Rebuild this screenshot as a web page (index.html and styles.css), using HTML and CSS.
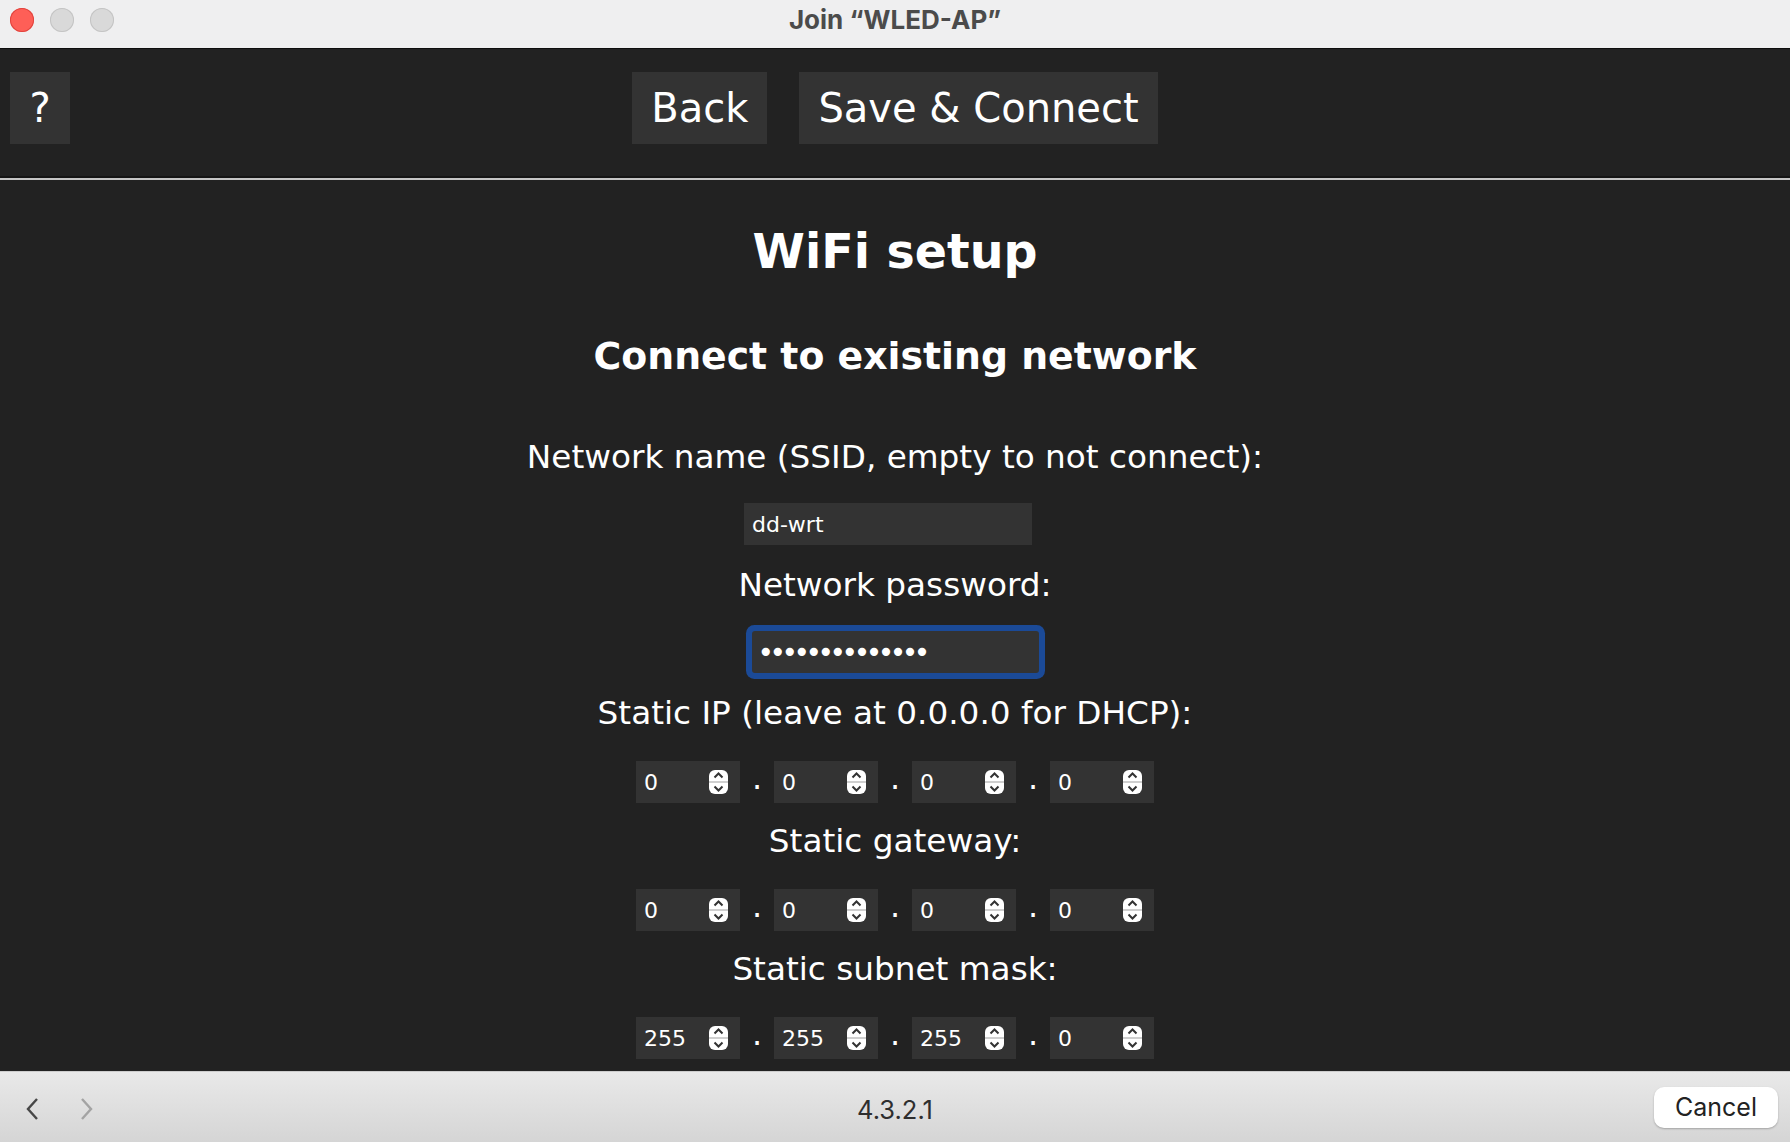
FILE: index.html
```
<!DOCTYPE html>
<html lang="en">
<head>
  <meta charset="UTF-8" />
  <meta name="viewport" content="width=device-width, initial-scale=1.0"/>
  <title>Join "WLED-AP"</title>
  <link rel="stylesheet" href="styles.css">
</head>
<body>
  <div class="titlebar">
    <div class="lights">
      <span class="light close"></span>
      <span class="light"></span>
      <span class="light"></span>
    </div>
    <div class="wintitle">Join “WLED-AP”</div>
    <div></div>
  </div>

  <div class="page">
    <div class="help"><button class="wbtn" type="button">?</button></div>
    <div class="topbtns">
      <button class="wbtn" type="button">Back</button>
      <button class="wbtn" type="submit">Save &amp; Connect</button>
    </div>
    <hr>
    <h2>WiFi setup</h2>
    <h3>Connect to existing network</h3>

    <div class="lbl">Network name (SSID, empty to not connect):</div>
    <div class="row"><input class="txt ssid" type="text" name="CS" maxlength="32" value="dd-wrt"></div>

    <div class="lbl">Network password:</div>
    <div class="row"><input class="txt pw" id="pw" type="password" name="CP" maxlength="63" value="wledwledwled12"></div>

    <div class="lbl">Static IP (leave at 0.0.0.0 for DHCP):</div>
    <div class="row nums">
      <div class="num"><input type="number" name="I0" value="0"><svg class="spin" viewBox="0 0 19 24"><rect width="19" height="24" rx="6" fill="#fff"/><rect y="11" width="19" height="2" fill="#cfcfcf"/><path d="M5.5 7.5 9.5 3.5 13.5 7.5M5.5 16.5 9.5 20.5 13.5 16.5" fill="none" stroke="#333" stroke-width="2"/></svg></div>
      <span class="dot">.</span>
      <div class="num"><input type="number" name="I1" value="0"><svg class="spin" viewBox="0 0 19 24"><rect width="19" height="24" rx="6" fill="#fff"/><rect y="11" width="19" height="2" fill="#cfcfcf"/><path d="M5.5 7.5 9.5 3.5 13.5 7.5M5.5 16.5 9.5 20.5 13.5 16.5" fill="none" stroke="#333" stroke-width="2"/></svg></div>
      <span class="dot">.</span>
      <div class="num"><input type="number" name="I2" value="0"><svg class="spin" viewBox="0 0 19 24"><rect width="19" height="24" rx="6" fill="#fff"/><rect y="11" width="19" height="2" fill="#cfcfcf"/><path d="M5.5 7.5 9.5 3.5 13.5 7.5M5.5 16.5 9.5 20.5 13.5 16.5" fill="none" stroke="#333" stroke-width="2"/></svg></div>
      <span class="dot">.</span>
      <div class="num"><input type="number" name="I3" value="0"><svg class="spin" viewBox="0 0 19 24"><rect width="19" height="24" rx="6" fill="#fff"/><rect y="11" width="19" height="2" fill="#cfcfcf"/><path d="M5.5 7.5 9.5 3.5 13.5 7.5M5.5 16.5 9.5 20.5 13.5 16.5" fill="none" stroke="#333" stroke-width="2"/></svg></div>
    </div>

    <div class="lbl">Static gateway:</div>
    <div class="row nums">
      <div class="num"><input type="number" name="G0" value="0"><svg class="spin" viewBox="0 0 19 24"><rect width="19" height="24" rx="6" fill="#fff"/><rect y="11" width="19" height="2" fill="#cfcfcf"/><path d="M5.5 7.5 9.5 3.5 13.5 7.5M5.5 16.5 9.5 20.5 13.5 16.5" fill="none" stroke="#333" stroke-width="2"/></svg></div>
      <span class="dot">.</span>
      <div class="num"><input type="number" name="G1" value="0"><svg class="spin" viewBox="0 0 19 24"><rect width="19" height="24" rx="6" fill="#fff"/><rect y="11" width="19" height="2" fill="#cfcfcf"/><path d="M5.5 7.5 9.5 3.5 13.5 7.5M5.5 16.5 9.5 20.5 13.5 16.5" fill="none" stroke="#333" stroke-width="2"/></svg></div>
      <span class="dot">.</span>
      <div class="num"><input type="number" name="G2" value="0"><svg class="spin" viewBox="0 0 19 24"><rect width="19" height="24" rx="6" fill="#fff"/><rect y="11" width="19" height="2" fill="#cfcfcf"/><path d="M5.5 7.5 9.5 3.5 13.5 7.5M5.5 16.5 9.5 20.5 13.5 16.5" fill="none" stroke="#333" stroke-width="2"/></svg></div>
      <span class="dot">.</span>
      <div class="num"><input type="number" name="G3" value="0"><svg class="spin" viewBox="0 0 19 24"><rect width="19" height="24" rx="6" fill="#fff"/><rect y="11" width="19" height="2" fill="#cfcfcf"/><path d="M5.5 7.5 9.5 3.5 13.5 7.5M5.5 16.5 9.5 20.5 13.5 16.5" fill="none" stroke="#333" stroke-width="2"/></svg></div>
    </div>

    <div class="lbl">Static subnet mask:</div>
    <div class="row nums">
      <div class="num"><input type="number" name="S0" value="255"><svg class="spin" viewBox="0 0 19 24"><rect width="19" height="24" rx="6" fill="#fff"/><rect y="11" width="19" height="2" fill="#cfcfcf"/><path d="M5.5 7.5 9.5 3.5 13.5 7.5M5.5 16.5 9.5 20.5 13.5 16.5" fill="none" stroke="#333" stroke-width="2"/></svg></div>
      <span class="dot">.</span>
      <div class="num"><input type="number" name="S1" value="255"><svg class="spin" viewBox="0 0 19 24"><rect width="19" height="24" rx="6" fill="#fff"/><rect y="11" width="19" height="2" fill="#cfcfcf"/><path d="M5.5 7.5 9.5 3.5 13.5 7.5M5.5 16.5 9.5 20.5 13.5 16.5" fill="none" stroke="#333" stroke-width="2"/></svg></div>
      <span class="dot">.</span>
      <div class="num"><input type="number" name="S2" value="255"><svg class="spin" viewBox="0 0 19 24"><rect width="19" height="24" rx="6" fill="#fff"/><rect y="11" width="19" height="2" fill="#cfcfcf"/><path d="M5.5 7.5 9.5 3.5 13.5 7.5M5.5 16.5 9.5 20.5 13.5 16.5" fill="none" stroke="#333" stroke-width="2"/></svg></div>
      <span class="dot">.</span>
      <div class="num"><input type="number" name="S3" value="0"><svg class="spin" viewBox="0 0 19 24"><rect width="19" height="24" rx="6" fill="#fff"/><rect y="11" width="19" height="2" fill="#cfcfcf"/><path d="M5.5 7.5 9.5 3.5 13.5 7.5M5.5 16.5 9.5 20.5 13.5 16.5" fill="none" stroke="#333" stroke-width="2"/></svg></div>
    </div>
  </div>

  <div class="bottombar">
    <div class="navarrows">
      <svg class="arrow" viewBox="0 0 14 24"><path d="M12 2 3 12 12 22" fill="none" stroke="#474747" stroke-width="2.4"/></svg>
      <svg class="arrow fwd" viewBox="0 0 14 24"><path d="M2 2 11 12 2 22" fill="none" stroke="#a3a3a3" stroke-width="2.4"/></svg>
    </div>
    <div class="addr">4.3.2.1</div>
    <div class="right"><button class="cancel" type="button">Cancel</button></div>
  </div>
<script>
  // keep the caret at the end of the password, as when typing
  const pw = document.getElementById('pw');
  pw.focus();
  pw.setSelectionRange(pw.value.length, pw.value.length);
</script>
</body>
</html>
```

FILE: styles.css
```
body { margin:0; height:100vh; display:flex; flex-direction:column; overflow:hidden; font-family:"DejaVu Sans", Verdana, sans-serif; }

/* window chrome */
.titlebar { height:49px; box-sizing:border-box; background:#efeff0; border-bottom:1px solid #0e0e0e; display:grid; grid-template-columns:1fr auto 1fr; align-items:start; font-family:Inter, "Liberation Sans", sans-serif; }
.lights { display:flex; gap:16px; padding-left:10px; height:40px; align-items:center; }
.light { width:24px; height:24px; border-radius:50%; background:#d9d9d9; box-shadow:inset 0 0 0 1px #c4c4c4; }
.light.close { background:#fe5f57; box-shadow:inset 0 0 0 1px #e0443e; }
.wintitle { line-height:40px; font-size:26px; font-weight:700; color:#4b4b4b; }

/* wled page */
.page { flex:1; background:#222; color:#fff; text-align:center; position:relative; line-height:64px; }
.help { position:absolute; left:10px; top:23px; }
.topbtns { display:flex; justify-content:center; gap:32px; padding:23px 0 32px; }
.wbtn { background:#333; color:#fff; font-family:inherit; font-size:40px; border:0; height:72px; padding:0 19px; line-height:1; }
.help .wbtn { width:60px; padding:0; }
hr { margin:0; border:0; border-top:2px solid #151515; border-bottom:2px solid #c5c5c5; }
h2 { font-size:47.5px; margin:40px 0 0; line-height:64px; }
h3 { font-size:37.8px; margin:40px 0 37px; line-height:64px; }
.lbl { font-size:32.7px; height:64px; }
.row { height:64px; box-sizing:border-box; padding-top:6px; display:flex; justify-content:center; align-items:center; }
.row.nums { padding-top:10px; }

input { background:#333; color:#fff; border:0; font-family:inherit; font-size:22px; height:42px; box-sizing:border-box; padding:0 8px; outline:none; caret-color:#fff; }
.txt { width:288px; }
.ssid { margin-right:14px; }
.pw { width:287px; border-radius:3px; box-shadow:0 0 0 6px #1b4a97; font-size:28px; letter-spacing:-4.5px; padding-left:6px; }

.num { display:flex; align-items:center; width:104px; height:42px; background:#333; padding:0 12px 0 8px; box-sizing:border-box; }
.num input { width:0; flex:1; padding:0; height:auto; background:transparent; -moz-appearance:textfield; }
.num input::-webkit-inner-spin-button, .num input::-webkit-outer-spin-button { -webkit-appearance:none; margin:0; }
.spin { width:19px; height:24px; flex:none; }
.dot { width:34px; height:42px; font-size:32px; line-height:34px; }

/* browser bottom bar */
.bottombar { height:71px; box-sizing:border-box; border-top:1px solid #cdcdcd; background:linear-gradient(#e9e9e9, #d5d5d5); display:grid; grid-template-columns:1fr auto 1fr; align-items:center; font-family:Inter, "Liberation Sans", sans-serif; }
.navarrows { display:flex; align-items:center; gap:41px; padding-left:25px; padding-top:4px; }
.arrow { width:14px; height:24px; }
.addr { font-size:25.5px; color:#2e2e2e; padding-top:4px; }
.right { display:flex; justify-content:flex-end; padding-right:12px; }
.cancel { width:124px; height:41px; background:#fff; border:0; border-radius:10px; box-shadow:0 1px 2px rgba(0,0,0,.25); font-family:inherit; font-size:25px; color:#222; }
```
